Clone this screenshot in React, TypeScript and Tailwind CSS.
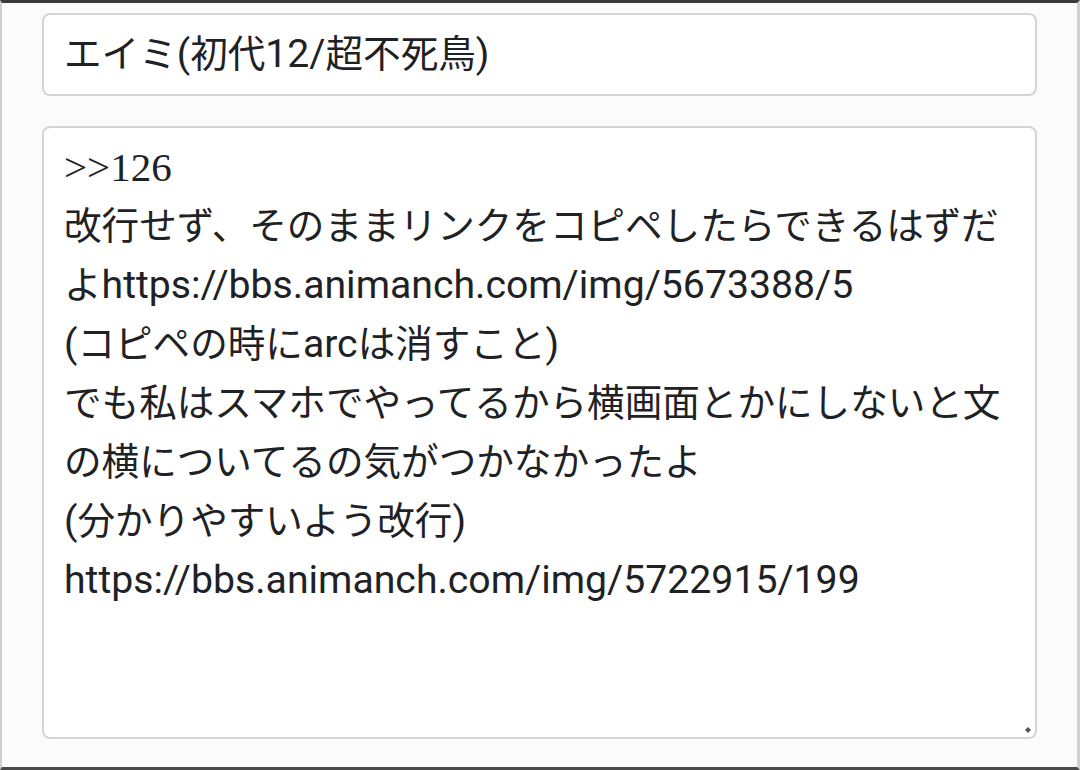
const lines = [
  "改行せず、そのままリンクをコピペしたらできるはずだ",
  "よhttps://bbs.animanch.com/img/5673388/5",
  "(コピペの時にarcは消すこと)",
  "でも私はスマホでやってるから横画面とかにしないと文",
  "の横についてるの気がつかなかったよ",
  "(分かりやすいよう改行)",
  "https://bbs.animanch.com/img/5722915/199",
];

// ascii runs are drawn a bit larger, like the phone's Roboto fallback
function Mixed({ text }: { text: string }) {
  const parts = text.split(/([\x20-\x7e]+)/).filter(Boolean);
  return (
    <>
      {parts.map((p, i) =>
        /^[\x20-\x7e]+$/.test(p) ? (
          <span key={i} className="text-[39.2px]">
            {p}
          </span>
        ) : (
          <span key={i}>{p}</span>
        )
      )}
    </>
  );
}

export default function App() {
  return (
    <div className="w-[1080px] h-[770px] overflow-hidden bg-[#fbfbfb] border-t-[3px] border-t-[#3a3a3a] border-b-[3px] border-b-[#4a4a4a] border-l-2 border-l-[#cfcfcf] border-r-[3px] border-r-[#cfcfcf] px-[40px] pt-[10px] flex flex-col gap-[30px] font-['Roboto','Noto_Sans_CJK_JP',sans-serif] text-[#1f2225]">
      <div className="h-[83px] shrink-0 bg-white border-2 border-[#d2d4d6] rounded-[8px] flex items-center px-[20px] text-[37.6px] whitespace-nowrap">
        <Mixed text="エイミ(初代12/超不死鳥)" />
      </div>

      <div className="relative h-[613px] shrink-0 bg-white border-2 border-[#d2d4d6] rounded-[8px] px-[20px] pt-[10px] text-[37.6px] leading-[59px]">
        <div className="font-['Liberation_Serif',serif] text-[41px]">&gt;&gt;126</div>
        {lines.map((line, i) => (
          <div key={i} className="whitespace-nowrap">
            <Mixed text={line} />
          </div>
        ))}
        <svg className="absolute right-[2px] bottom-[2px]" width="10" height="10" viewBox="0 0 10 10">
          <path d="M5 2 L8 5 L5 8 L2 5 Z" fill="#555" />
        </svg>
      </div>
    </div>
  );
}
